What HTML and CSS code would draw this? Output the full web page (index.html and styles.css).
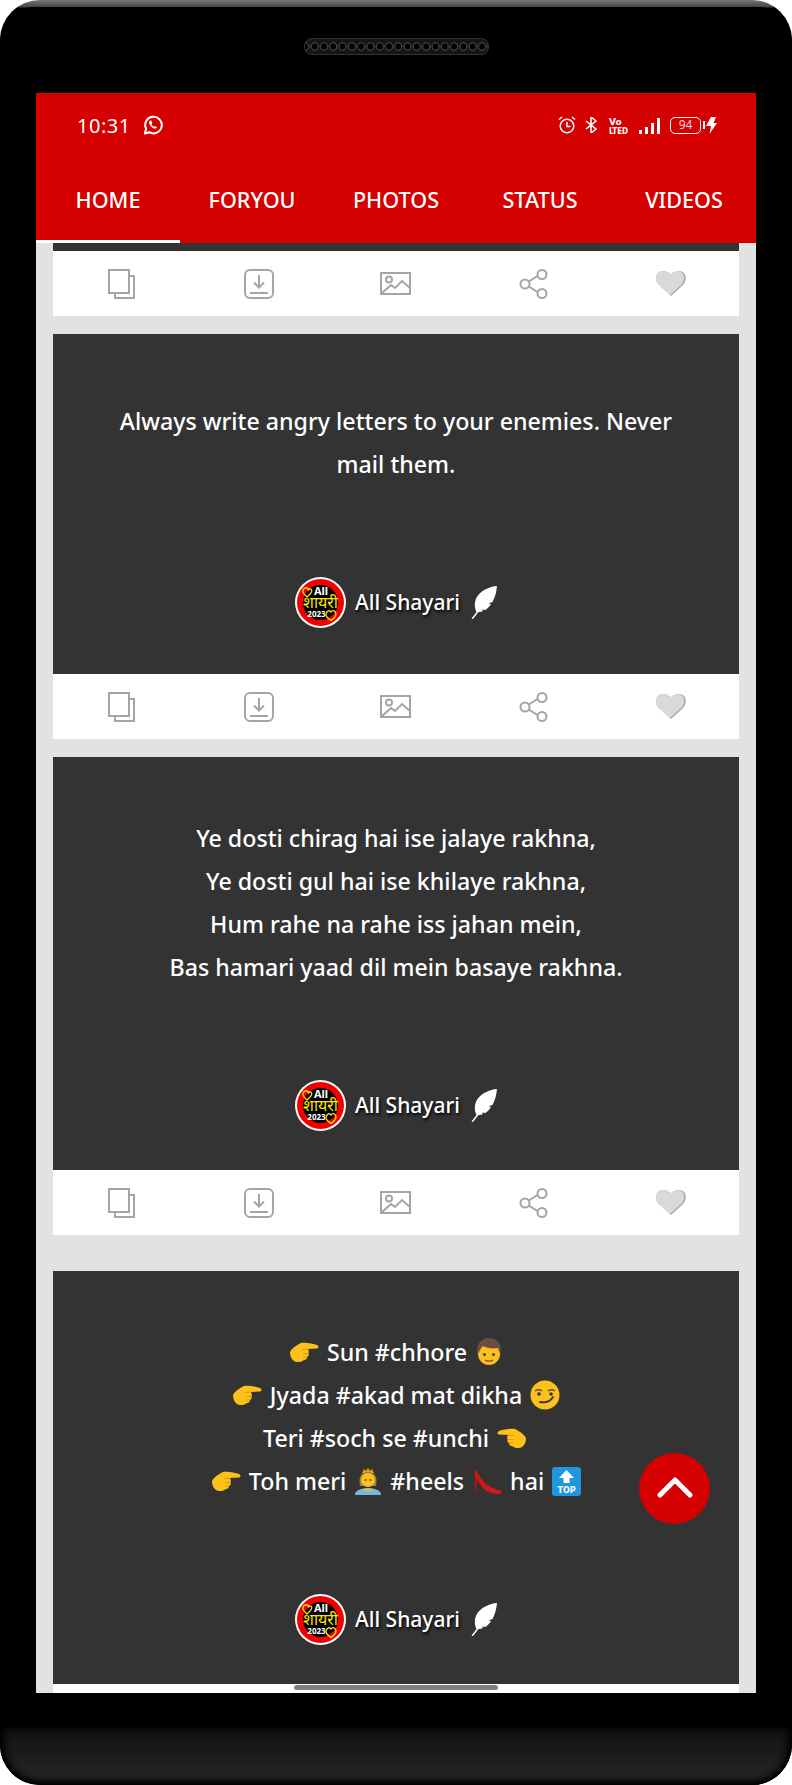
FILE: index.html

```html
<!DOCTYPE html>
<html lang="hi">
<head>
  <meta charset="UTF-8">
  <meta name="viewport" content="width=device-width, initial-scale=1">
  <title>All Shayari</title>
  <link rel="stylesheet" href="styles.css">
</head>
<body>
  <svg class="defs" width="0" height="0">
    <symbol id="i-copy" viewBox="0 0 27 30">
      <path d="M1 1h20v23H1z M21 7h5v22H7v-5" fill="none" stroke="#a5a5a5" stroke-width="2"/>
    </symbol>
    <symbol id="i-save" viewBox="0 0 30 30">
      <rect x="1" y="1" width="28" height="28" rx="5" fill="none" stroke="#a5a5a5" stroke-width="2"/>
      <path d="M15 6v12M10 13.500l5 5 5-5M6 24h18" fill="none" stroke="#a5a5a5" stroke-width="2"/>
    </symbol>
    <symbol id="i-image" viewBox="0 0 31 23">
      <rect x="1" y="1" width="29" height="21" fill="none" stroke="#a5a5a5" stroke-width="2"/>
      <circle cx="9" cy="7.500" r="3" fill="none" stroke="#a5a5a5" stroke-width="2"/>
      <path d="M2 21l9-8 4 3 7-7 8 7" fill="none" stroke="#a5a5a5" stroke-width="2"/>
    </symbol>
    <symbol id="i-share" viewBox="0 0 29 30">
      <path d="M9 13l11-7M9 17l11 7" stroke="#a5a5a5" stroke-width="2"/>
      <circle cx="6" cy="15" r="4.500" fill="#fff" stroke="#a5a5a5" stroke-width="2"/>
      <circle cx="23" cy="5.500" r="4.500" fill="#fff" stroke="#a5a5a5" stroke-width="2"/>
      <circle cx="23" cy="24.500" r="4.500" fill="#fff" stroke="#a5a5a5" stroke-width="2"/>
    </symbol>
    <symbol id="i-heart" viewBox="0 0 31 25">
      <path d="M16 25L28 14C33 8 31 0 24 0C21 0 18 1 16 4C14 1 11 0 8 0C1 0 -1 8 3 13z" fill="#a9a9a9"/>
      <path d="M15 24L27 13C31 7 29 0 22.500 0C19.500 0 17 1.500 15.500 4C14 1.500 11 0 8 0C1 0 -1 8 3 13z" fill="#d9d9d9"/>
    </symbol>
    <symbol id="i-feather" viewBox="0 0 26 33">
      <path d="M26 0C15 1 6 7 4 16C3.500 20 4 23 5.500 26L0.500 32.500L2 33L7.500 26C9 26 11 25.500 12 25L11 23.500L14.500 24C17 22 19 20 20 18L17.500 17.500L21.500 16C24 11 25.500 6 26 0z" fill="#fff"/>
    </symbol>
    <symbol id="e-point-right" viewBox="0 0 30 24">
      <path d="M12 3C16 2 25 4 28 5C30 6 30 8 28 8.500L19 9C20 11 20 12 19.500 13.500C20 15 19.500 16.500 18 17C18 19 17 20 15 20C13 22 8 23 5 21C2 19 1 15 1 12C3 8 8 5 12 3z" fill="#fcc21b"/>
      <path d="M19 9L13 9.500M19.500 13.500L14 13.500M18 17L14 17" stroke="#e59600" stroke-width="1" fill="none"/>
    </symbol>
    <symbol id="e-point-left" viewBox="0 0 30 24">
      <path d="M18 3C14 2 5 4 2 5C0 6 0 8 2 8.500L11 9C10 11 10 12 10.500 13.500C10 15 10.500 16.500 12 17C12 19 13 20 15 20C17 22 22 23 25 21C28 19 29 15 29 12C27 8 22 5 18 3z" fill="#fcc21b"/>
      <path d="M11 9L17 9.500M10.500 13.500L16 13.500M12 17L16 17" stroke="#e59600" stroke-width="1" fill="none"/>
    </symbol>
    <symbol id="e-boy" viewBox="0 0 28 30">
      <circle cx="14" cy="17" r="11" fill="#fbc11b"/>
      <path d="M2.500 18C0 6 8 1 14 1C21 1 28 6 25.500 18L23 11C18 12 11 11 8 9C6 11 5 13 2.500 18z" fill="#6d4c41"/>
      <circle cx="9.500" cy="17.500" r="1.500" fill="#444"/>
      <circle cx="18.500" cy="17.500" r="1.500" fill="#444"/>
      <path d="M10 23c2 1.500 6 1.500 8 0" stroke="#7a4a10" stroke-width="1.200" fill="none"/>
    </symbol>
    <symbol id="e-smirk" viewBox="0 0 30 30">
      <circle cx="15" cy="15" r="14.500" fill="#fcc21b"/>
      <path d="M5 11c2-1.500 5-1.500 7 0M18 11c2-1.500 5-1.500 7 0" stroke="#6d4c41" stroke-width="1.500" fill="none"/>
      <circle cx="9" cy="14" r="1.800" fill="#333"/>
      <circle cx="21" cy="14" r="1.800" fill="#333"/>
      <path d="M10 22c5 1 10 0 13-5" stroke="#2f2f2f" stroke-width="1.800" fill="none" stroke-linecap="round"/>
    </symbol>
    <symbol id="e-princess" viewBox="0 0 28 30">
      <path d="M8 7l2-4 2 2 2-3 2 3 2-2 2 4z" fill="#e2a610"/>
      <path d="M6 20C4 10 8 6 14 6C20 6 24 10 22 20z" fill="#a87a3a"/>
      <circle cx="14" cy="14" r="7" fill="#fbc11b"/>
      <circle cx="11.500" cy="14" r="1" fill="#444"/>
      <circle cx="16.500" cy="14" r="1" fill="#444"/>
      <path d="M1 29C1 24 8 22 14 22C20 22 27 24 27 29z" fill="#7cb6de"/>
      <path d="M11 23c1 2 5 2 6 0" stroke="#fbc11b" stroke-width="2" fill="none"/>
    </symbol>
    <symbol id="e-heel" viewBox="0 0 30 27">
      <path d="M2 1C5 3 8 9 12 14C16 18 22 21 29 23C30 25 29 26 27 26C20 26 14 24 10 19C8 16 6 13 5 10L4 26H3L2 8z" fill="#d01818"/>
      <path d="M2 1L3.500 26" stroke="#5d2a20" stroke-width="1.500"/>
    </symbol>
    <symbol id="logo-badge" viewBox="0 0 51 51">
      <circle cx="25.500" cy="25.500" r="25.500" fill="#fff"/>
      <circle cx="25.500" cy="25.500" r="23.500" fill="#f00000"/>
      <circle cx="25.500" cy="25.500" r="17.500" fill="#000"/>
      <path d="M8 13c1.500-3 5-3 5.500 0 2-2 4-.500 3 2-.800 2-3 3.500-4.500 5-2-2-5-4-4-7zM31 37c1-3 3.500-4.500 5-2 1.500-2.500 5-1 5 2 0 3-3 5-5 6.500-2-1.500-5.500-3.500-5-6.500z" fill="none" stroke="#ffe600" stroke-width="1.300"/>
    </symbol>
  </svg>

  <div class="phone">
    <div class="bezel">
      <div class="speaker"></div>

      <div class="screen">
        <div class="appbar">
          <div class="statusbar">
            <div class="status-left">
              <span class="clock">10:31</span>
              <svg class="wa" viewBox="0 0 20 20" width="20" height="20">
                <path d="M1.800 18.500l1.300-4.700A8.300 8.300 0 1 1 6.300 17.200z" fill="none" stroke="#fff" stroke-width="2" stroke-linejoin="round"/>
                <path d="M7 5.500c-1 .7-1.200 2-.5 3.500.9 2 2.600 3.700 4.500 4.400 1.400.5 2.600 0 3.100-1.200l-2.100-1.300-1 .9c-1-.5-2-1.500-2.500-2.600l.8-1-1-2.700z" fill="#fff"/>
              </svg>
            </div>
            <div class="status-right">
              <svg viewBox="0 0 18 18" width="18" height="18">
                <circle cx="9" cy="10" r="6.800" fill="none" stroke="#fff" stroke-width="1.500"/>
                <path d="M9 6v4.500h3.500M1 3.500l3-2.500M17 3.500l-3-2.500" fill="none" stroke="#fff" stroke-width="1.500"/>
              </svg>
              <svg viewBox="0 0 14 16" width="14" height="16">
                <path d="M2 4l10 8-5 4V0l5 4-10 8" fill="none" stroke="#fff" stroke-width="1.600"/>
              </svg>
              <svg class="volte" viewBox="0 0 20 17" width="20" height="17">
                <text class="volte-label"><tspan x="0" y="7.500">Vo</tspan><tspan class="volte-lte" x="0" y="16.500">LTED</tspan></text>
              </svg>
              <div class="signal"><i></i><i></i><i></i><i></i></div>
              <div class="battery"><span>94</span></div>
              <svg class="bolt" viewBox="0 0 11 17" width="11" height="17">
                <path d="M5 0h5L7.500 6H11L3.500 17l1.500-8H0z" fill="#fff"/>
              </svg>
            </div>
          </div>
          <nav class="tabs">
            <a class="tab active">HOME</a>
            <a class="tab">FORYOU</a>
            <a class="tab">PHOTOS</a>
            <a class="tab">STATUS</a>
            <a class="tab">VIDEOS</a>
          </nav>
        </div>

        <div class="feed">
          <div class="card">
            <div class="stub"></div>
            <div class="actions">
              <svg width="27" height="30"><use href="#i-copy"/></svg>
              <svg width="30" height="30"><use href="#i-save"/></svg>
              <svg width="31" height="23"><use href="#i-image"/></svg>
              <svg width="29" height="30"><use href="#i-share"/></svg>
              <svg width="31" height="25"><use href="#i-heart"/></svg>
            </div>
          </div>

          <div class="card">
            <div class="quote quote-short">
              <p>Always write angry letters to your enemies. Never<br>mail them.</p>
              <div class="sign">
                <svg class="sign-logo" viewBox="0 0 51 51" width="51" height="51">
                  <use href="#logo-badge"/>
                  <text class="logo-text" text-anchor="middle"><tspan class="logo-all" x="26" y="18">All</tspan><tspan class="logo-hi" x="25.500" y="31">शायरी</tspan><tspan class="logo-year" x="21.500" y="40">2023</tspan></text>
                </svg>
                <span>All Shayari</span>
                <svg class="sign-feather" width="26" height="33"><use href="#i-feather"/></svg>
              </div>
            </div>
            <div class="actions">
              <svg width="27" height="30"><use href="#i-copy"/></svg>
              <svg width="30" height="30"><use href="#i-save"/></svg>
              <svg width="31" height="23"><use href="#i-image"/></svg>
              <svg width="29" height="30"><use href="#i-share"/></svg>
              <svg width="31" height="25"><use href="#i-heart"/></svg>
            </div>
          </div>

          <div class="card">
            <div class="quote">
              <p>Ye dosti chirag hai ise jalaye rakhna,<br>Ye dosti gul hai ise khilaye rakhna,<br>Hum rahe na rahe iss jahan mein,<br>Bas hamari yaad dil mein basaye rakhna.</p>
              <div class="sign">
                <svg class="sign-logo" viewBox="0 0 51 51" width="51" height="51">
                  <use href="#logo-badge"/>
                  <text class="logo-text" text-anchor="middle"><tspan class="logo-all" x="26" y="18">All</tspan><tspan class="logo-hi" x="25.500" y="31">शायरी</tspan><tspan class="logo-year" x="21.500" y="40">2023</tspan></text>
                </svg>
                <span>All Shayari</span>
                <svg class="sign-feather" width="26" height="33"><use href="#i-feather"/></svg>
              </div>
            </div>
            <div class="actions">
              <svg width="27" height="30"><use href="#i-copy"/></svg>
              <svg width="30" height="30"><use href="#i-save"/></svg>
              <svg width="31" height="23"><use href="#i-image"/></svg>
              <svg width="29" height="30"><use href="#i-share"/></svg>
              <svg width="31" height="25"><use href="#i-heart"/></svg>
            </div>
          </div>

          <div class="card card-apart">
            <div class="quote">
              <p>
                <svg class="emoji" width="30" height="24"><use href="#e-point-right"/></svg> Sun #chhore <svg class="emoji" width="28" height="30"><use href="#e-boy"/></svg><br>
                <svg class="emoji" width="30" height="24"><use href="#e-point-right"/></svg> Jyada #akad mat dikha <svg class="emoji" width="30" height="30"><use href="#e-smirk"/></svg><br>
                Teri #soch se #unchi <svg class="emoji" width="30" height="24"><use href="#e-point-left"/></svg><br>
                <svg class="emoji" width="30" height="24"><use href="#e-point-right"/></svg> Toh meri <svg class="emoji" width="28" height="30"><use href="#e-princess"/></svg> #heels <svg class="emoji" width="30" height="27"><use href="#e-heel"/></svg> hai
                <svg class="emoji" viewBox="0 0 29 29" width="29" height="29">
                  <rect width="29" height="29" rx="3" fill="#2196e0"/>
                  <path d="M14.500 3L22 11H17.500V16H11.500V11H7z" fill="#fff"/>
                  <text x="14.500" y="25.500" text-anchor="middle" class="top-label">TOP</text>
                </svg>
              </p>
              <div class="sign">
                <svg class="sign-logo" viewBox="0 0 51 51" width="51" height="51">
                  <use href="#logo-badge"/>
                  <text class="logo-text" text-anchor="middle"><tspan class="logo-all" x="26" y="18">All</tspan><tspan class="logo-hi" x="25.500" y="31">शायरी</tspan><tspan class="logo-year" x="21.500" y="40">2023</tspan></text>
                </svg>
                <span>All Shayari</span>
                <svg class="sign-feather" width="26" height="33"><use href="#i-feather"/></svg>
              </div>
            </div>
            <div class="actions"></div>
          </div>
        </div>

        <button class="to-top">
          <svg viewBox="0 0 36 22" width="36" height="22">
            <path d="M3 19L18 4l15 15" fill="none" stroke="#fff" stroke-width="5" stroke-linecap="round" stroke-linejoin="round"/>
          </svg>
        </button>
        <div class="home-pill"></div>
      </div>
    </div>
    <div class="chin"></div>
  </div>
</body>
</html>
```

FILE: styles.css

```css
* {
  box-sizing: border-box;
}

body {
  margin: 0;
  background-color: #fff;
  font-family: "Noto Sans", "Open Sans", sans-serif;
}

.defs {
  display: block;
  height: 0;
}

.phone {
  width: 792px;
  height: 1785px;
  padding-top: 7px;
  background: linear-gradient(#777 0, #444 7px, #000 8px);
  border-radius: 40px;
  overflow: hidden;
}

.bezel {
  height: 1720px;
  padding: 31px 36px 0;
  background-color: #000;
  border-radius: 33px 33px 0 0;
}

.speaker {
  width: 185px;
  height: 17px;
  margin: 0 auto 38px;
  border: 1px solid #333;
  border-radius: 8px;
  background-color: #151515;
  background-image: radial-gradient(circle at center, #000 0 3px, #444 3.2px 4px, transparent 4.4px);
  background-size: 9.3px 15px;
  background-position: 5px 0;
  background-repeat: repeat-x;
}

.screen {
  position: relative;
  width: 720px;
  height: 1600px;
  overflow: hidden;
  background-color: #e2e2e2;
}

.appbar {
  background-color: #d50000;
  color: #fff;
}

.statusbar {
  display: flex;
  justify-content: space-between;
  align-items: center;
  height: 64px;
  padding: 0 39px 0 41px;
}

.status-left {
  display: flex;
  align-items: center;
  gap: 12px;
}

.clock {
  font-size: 20px;
  letter-spacing: 0.5px;
}

.status-right {
  display: flex;
  align-items: center;
  gap: 8px;
}

.volte {
  margin-left: 3px;
}

.volte-label {
  font: bold 9px "DejaVu Sans", sans-serif;
  fill: #fff;
}

.volte-lte {
  font: bold 8px "DejaVu Sans Condensed", "DejaVu Sans", sans-serif;
}

.signal {
  display: flex;
  align-items: flex-end;
  gap: 3px;
  height: 17px;
  margin-left: 2px;
}

.signal i {
  display: block;
  width: 3px;
  background-color: #fff;
}

.signal i:nth-child(1) { height: 4px; }
.signal i:nth-child(2) { height: 7px; }
.signal i:nth-child(3) { height: 11px; }
.signal i:nth-child(4) { height: 16px; }

.battery {
  position: relative;
  width: 31px;
  height: 17px;
  margin-left: 2px;
  border: 1.5px solid #fff;
  border-radius: 5px;
  font-size: 12px;
  line-height: 14px;
  text-align: center;
  color: #fbd0d0;
}

.battery::after {
  content: "";
  position: absolute;
  right: -5px;
  top: 3px;
  width: 2px;
  height: 8px;
  background-color: #fff;
}

.bolt {
  margin-left: -3px;
}

.tabs {
  display: flex;
  height: 86px;
}

.tab {
  flex: 1;
  padding-top: 28px;
  text-align: center;
  font-size: 21.600px;
  font-weight: 500;
  border-bottom: 3px solid transparent;
}

.tab.active {
  border-bottom-color: #fff;
}

.feed {
  padding: 0 17px;
}

.card {
  margin-bottom: 18px;
}

.card-apart {
  margin-top: 36px;
}

.stub {
  height: 8px;
  background-color: #333;
}

.actions {
  display: grid;
  grid-template-columns: repeat(5, 1fr);
  justify-items: center;
  align-items: center;
  height: 65px;
  background-color: #fff;
}

.quote {
  padding: 60px 20px 39px;
  background-color: #333;
  color: #fff;
  text-align: center;
}

.quote p {
  margin: 0 0 91px;
  font-size: 23.200px;
  font-weight: 500;
  line-height: 43px;
}

.quote-short {
  padding-top: 66px;
  padding-bottom: 46px;
}

.emoji {
  vertical-align: middle;
  margin: -5px 2px 0;
}

.sign {
  display: flex;
  justify-content: center;
  align-items: center;
  font-size: 21px;
  font-weight: 500;
  text-shadow: 1px 2px 3px #000;
}

.sign span {
  margin-top: -2px;
}

.sign-logo {
  margin-right: 9px;
}

.sign-feather {
  margin-left: 11px;
}

.logo-text {
  font-family: "Noto Sans", sans-serif;
  text-shadow: none;
}

.logo-all {
  font-size: 11px;
  font-weight: bold;
  fill: #fff;
}

.logo-hi {
  font-size: 16px;
  font-weight: normal;
  fill: #ffe600;
}

.logo-year {
  font-size: 8px;
  font-weight: bold;
  fill: #fff;
}

.top-label {
  font: bold 8px "DejaVu Sans", sans-serif;
  fill: #fff;
}

.to-top {
  position: absolute;
  left: 603px;
  top: 1360px;
  display: flex;
  justify-content: center;
  align-items: center;
  width: 71px;
  height: 71px;
  padding: 0 0 3px;
  border: none;
  border-radius: 50%;
  background-color: #d50000;
}

.home-pill {
  position: absolute;
  left: 258px;
  top: 1592px;
  width: 204px;
  height: 5px;
  border-radius: 3px;
  background-color: #808080;
}

.chin {
  height: 58px;
  background: linear-gradient(#101010, #282828);
  box-shadow: inset 0 -4px 6px #000, inset 5px 0 8px -2px #000, inset -5px 0 8px -2px #000;
  border-radius: 0 0 40px 40px;
}
```
